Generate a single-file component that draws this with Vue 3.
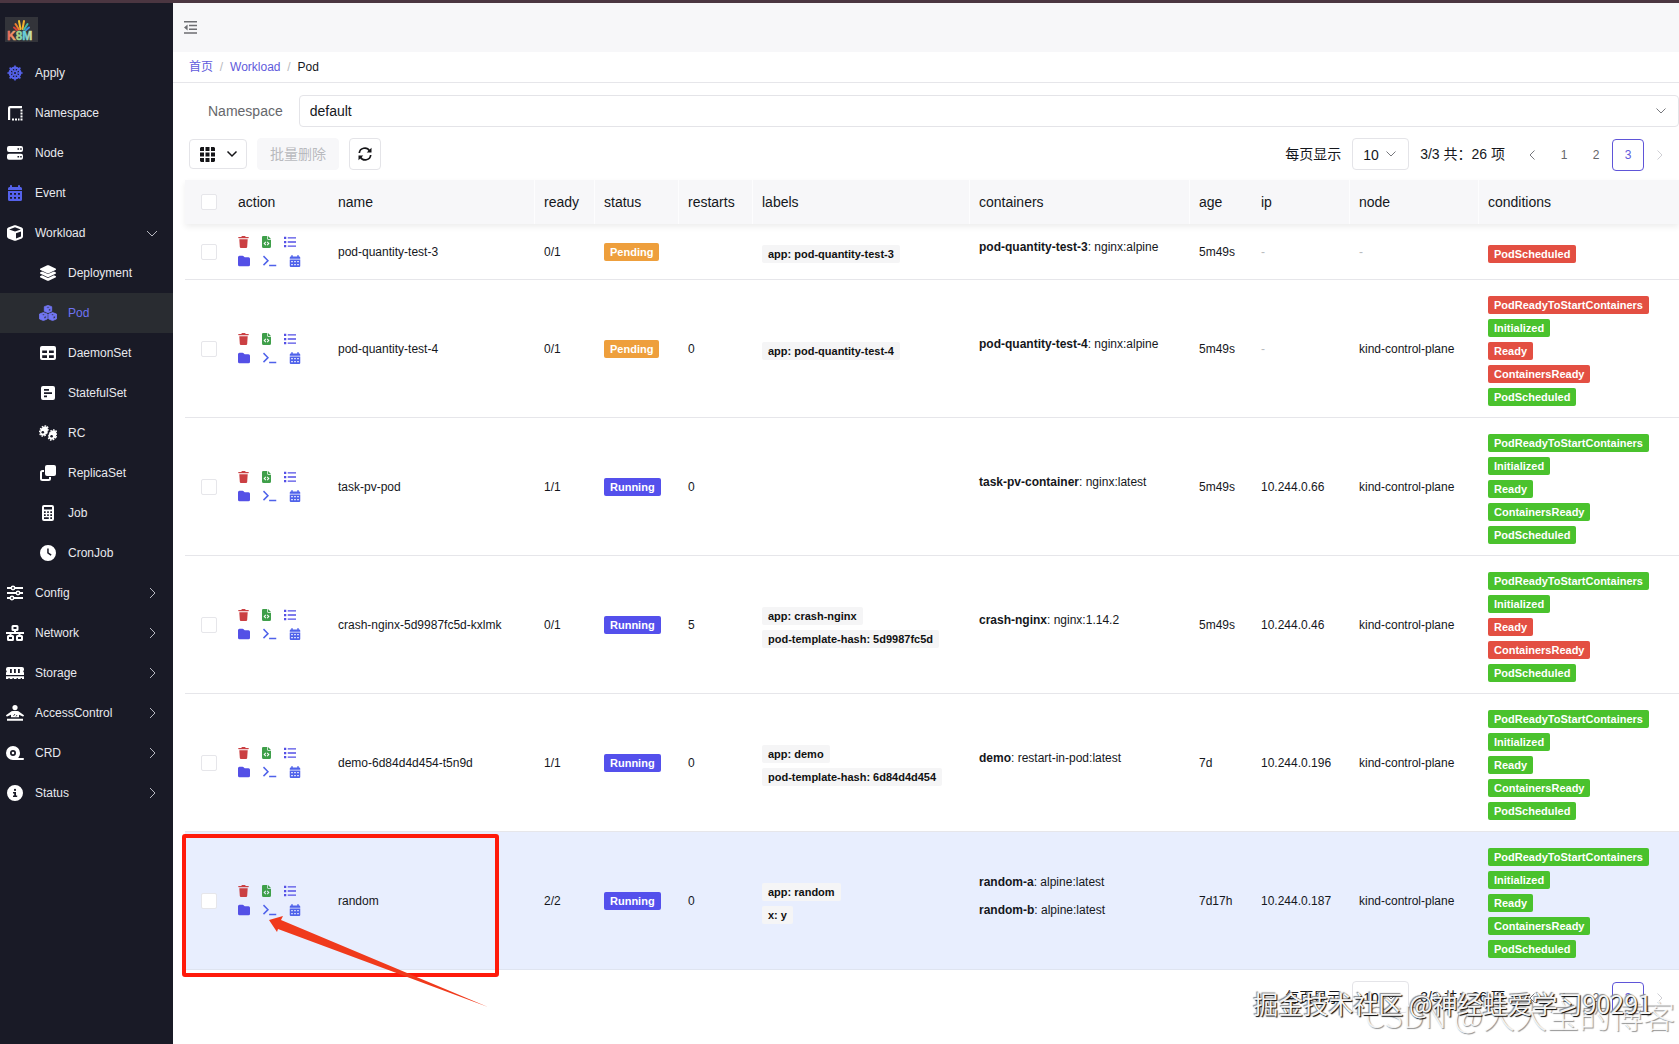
<script setup>
import { ref } from 'vue'

const icons = {
  helm: '<circle cx="8" cy="8" r="5.3" fill="none" stroke="currentColor" stroke-width="2.2"/><circle cx="8" cy="8" r="2.2"/><path d="M8 .4v15.2M.4 8h15.200M2.600 2.600l10.800 10.800M13.400 2.600L2.600 13.400" stroke="currentColor" stroke-width="1.600"/><circle cx="8" cy="8" r="1" fill="#191a26"/>',
  border: '<path d="M1 15V3a2 2 0 0 1 2-2h12v2.200H3.200V15z"/><path d="M5 13.500h2v2H5zM8 13.500h2v2H8zM11 13.500h1.500v2H11zM13.500 13.500h2v2h-2zM13.500 10.500h2v2h-2zM13.500 7.500h2v2h-2zM13.500 4.500h2v2h-2z"/>',
  server: '<path fill-rule="evenodd" d="M2 1h12a2 2 0 0 1 2 2v2a2 2 0 0 1-2 2H2a2 2 0 0 1-2-2V3a2 2 0 0 1 2-2zm8.500 2.200v1.600h1.600V3.200zm2.700 0v1.600h1.500V3.200zM2 8.800h12a2 2 0 0 1 2 2v2a2 2 0 0 1-2 2H2a2 2 0 0 1-2-2v-2a2 2 0 0 1 2-2zM10.500 11v1.600h1.600V11zm2.700 0v1.600h1.500V11z"/>',
  calendar: '<path fill-rule="evenodd" d="M4 0c.6 0 1 .4 1 1v1h6V1a1 1 0 1 1 2 0v1h.500A1.500 1.500 0 0 1 15 3.500V5H1V3.500A1.500 1.500 0 0 1 2.500 2H3V1c0-.6.4-1 1-1zM1 6h14v8.500a1.500 1.500 0 0 1-1.500 1.500h-11A1.500 1.500 0 0 1 1 14.500zm2 2v1.700h2V8zm4 0v1.700h2V8zm4 0v1.700h2V8zm-8 4v1.700h2V12zm4 0v1.700h2V12zm4 0v1.700h2V12z"/>',
  cube: '<path fill-rule="evenodd" d="M7.300.3a2 2 0 0 1 1.400 0l6 2.200A2 2 0 0 1 16 4.400v7.200a2 2 0 0 1-1.200 1.800l-6 2.300a2 2 0 0 1-1.500 0l-6-2.300A2 2 0 0 1 0 11.600V4.400a2 2 0 0 1 1.300-1.900zM8 2.300L2.200 4.400 8 6.500l5.800-2.100zm1 11.200l5-1.900V6.400L9 8.200z"/>',
  layers: '<path d="M7.300.3a1.600 1.600 0 0 1 1.400 0l6.800 3.200c.7.3.7 1.200 0 1.500L8.700 8.200a1.600 1.600 0 0 1-1.400 0L.5 5c-.7-.3-.7-1.200 0-1.500zM.5 7.200l1.600-.8 4.700 2.200c.8.4 1.600.4 2.400 0l4.700-2.200 1.600.8c.7.3.7 1.200 0 1.500l-6.800 3.200a1.600 1.600 0 0 1-1.400 0L.5 8.700c-.7-.3-.7-1.200 0-1.500zm0 3.800l1.600-.8 4.700 2.200c.8.4 1.600.4 2.400 0l4.700-2.200 1.600.8c.7.3.7 1.200 0 1.500l-6.800 3.200a1.600 1.600 0 0 1-1.400 0L.5 12.500c-.7-.3-.7-1.200 0-1.500z"/>',
  cubes: '<g stroke="currentColor" stroke-width=".8" stroke-linejoin="round"><path fill-rule="evenodd" d="M9 .4l3.700 1.300v4.500L9 7.800 5.300 6.200V1.700zM9 1.600L6.800 2.400 9 3.200l2.200-.8zM9.600 6.300l2.100-.9V3.400l-2.100.8zM4.400 7.600l3.900 1.400v4.900l-3.900 1.700-3.900-1.700V9zM4.400 8.900L2.300 9.600l2.100.8 2.100-.8zM5 13.900l2.200-.9v-2.200L5 11.600zM13.600 7.600L17.500 9v4.900l-3.900 1.700-3.900-1.700V9zM13.600 8.900l-2.100.7 2.100.8 2.100-.8zM14.200 13.900l2.200-.9v-2.200l-2.200.8z"/></g>',
  table: '<path fill-rule="evenodd" d="M2 1h12a2 2 0 0 1 2 2v10a2 2 0 0 1-2 2H2a2 2 0 0 1-2-2V3a2 2 0 0 1 2-2zm.2 4.500v2.600H7V5.500zm6.800 0v2.600h4.800V5.500zM2.200 10.200V13H7v-2.800zm6.800 0V13h4.800v-2.800z"/>',
  poll: '<path fill-rule="evenodd" d="M3 1h10a2 2 0 0 1 2 2v10a2 2 0 0 1-2 2H3a2 2 0 0 1-2-2V3a2 2 0 0 1 2-2zm1 3v1.800h5V4zm0 3.200V9h8V7.200zm0 3.200v1.800h3v-1.800z"/>',
  gears: '<g transform="rotate(28 5 6)"><ellipse cx="5" cy="6" rx="3.600" ry="5"/><ellipse cx="5" cy="6" rx="4" ry="5.400" fill="none" stroke="currentColor" stroke-width="1.400" stroke-dasharray="1.600 1.200"/></g><g transform="rotate(28 13.500 10)"><ellipse cx="13.500" cy="10" rx="3.600" ry="5"/><ellipse cx="13.500" cy="10" rx="4" ry="5.400" fill="none" stroke="currentColor" stroke-width="1.400" stroke-dasharray="1.600 1.200"/></g><path d="M11.800 1.500L6.800 14.500" stroke="#191a26" stroke-width="1.500"/><circle cx="3.800" cy="7.200" r="1.300" fill="#191a26"/><circle cx="12.600" cy="11.300" r="1.300" fill="#191a26"/>',
  clone: '<path d="M7 0h7a2 2 0 0 1 2 2v7a2 2 0 0 1-2 2H7a2 2 0 0 1-2-2V2a2 2 0 0 1 2-2z"/><path d="M4 6H2.500A1.500 1.500 0 0 0 1 7.500v6A1.500 1.500 0 0 0 2.500 15h6a1.500 1.500 0 0 0 1.500-1.500V12" fill="none" stroke="currentColor" stroke-width="2"/>',
  calculator: '<path fill-rule="evenodd" d="M4 0h8a2 2 0 0 1 2 2v12a2 2 0 0 1-2 2H4a2 2 0 0 1-2-2V2a2 2 0 0 1 2-2zm0 2v2.600h8V2zm0 4.300V8h1.700V6.300zm3.200 0V8h1.600V6.300zm3.100 0V8H12V6.300zM4 9.300V11h1.700V9.300zm3.200 0V11h1.600V9.300zm3.100 0V11H12V9.300zM4 12.300V14h4.800v-1.700zm6.300 0V14H12v-1.700z"/>',
  clock: '<path fill-rule="evenodd" d="M8 0a8 8 0 1 1 0 16A8 8 0 0 1 8 0zm-.8 3.500V8c0 .3.1.5.300.6l3.200 2.100.9-1.200-2.900-1.900V3.500z"/>',
  sliders: '<path d="M0 3h16M0 8h16M0 13h16" stroke="currentColor" stroke-width="1.800"/><g fill="#191a26" stroke="currentColor" stroke-width="1.500"><circle cx="6" cy="3" r="1.700"/><circle cx="11" cy="8" r="1.700"/><circle cx="5" cy="13" r="1.700"/></g>',
  network: '<g fill="none" stroke="currentColor" stroke-width="2"><rect x="6.500" y="1" width="5" height="4" rx=".5"/><rect x="2" y="11" width="5" height="4" rx=".5"/><rect x="11" y="11" width="5" height="4" rx=".5"/><path d="M0 8h18M9 5v3M4.500 8v3M13.500 8v3"/></g>',
  memory: '<path fill-rule="evenodd" d="M2 2h14a2 2 0 0 1 2 2v1.200a1.200 1.200 0 0 0 0 2.200V10H0V7.400a1.200 1.200 0 0 0 0-2.200V4a2 2 0 0 1 2-2zm2 2v4h1.800V4zm4 0v4h1.800V4zm4 0v4h1.800V4z"/><path d="M0 11.200h18V14h-2v-1h-1.300v1h-2.800v-1h-1.300v1H7.800v-1H6.500v1H3.700v-1H2.400v1H0z"/>',
  person: '<circle cx="9" cy="2.600" r="2.600"/><path d="M6.800 6h4.400c1 0 1.700.4 2.300 1l4.200 3c.7.600 0 1.800-.9 1.400L13 9.800v2.500H5V9.800l-3.800 1.600c-.9.400-1.600-.8-.9-1.400l4.200-3c.6-.6 1.300-1 2.300-1zM1 13.700h16v2H1z"/><path d="M7.500 11l1.500-2M10 11.500l1-1.500" stroke="#191a26" stroke-width=".8"/>',
  tape: '<path fill-rule="evenodd" d="M7 1a7 7 0 0 1 7 7c0 1.900-.7 3.600-1.800 4.900H17a1 1 0 1 1 0 2.100H7A7 7 0 0 1 7 1zm0 4a3 3 0 1 0 0 6 3 3 0 0 0 0-6zm0 1.700a1.300 1.300 0 1 1 0 2.600 1.300 1.300 0 0 1 0-2.600z"/>',
  info: '<path fill-rule="evenodd" d="M8 0a8 8 0 1 1 0 16A8 8 0 0 1 8 0zm0 3.800a1.100 1.100 0 1 0 0 2.200 1.100 1.100 0 0 0 0-2.200zM6 7v1.500h1.200v2H6V12h4.200v-1.500H9V7z"/>',
  trash: '<path d="M5.300.6L5 1.200H1.800a.9.900 0 0 0 0 1.900h12.400a.9.900 0 0 0 0-1.900H11l-.3-.6A1 1 0 0 0 9.800 0H6.200a1 1 0 0 0-.9.600zM2.400 4.200l.7 10.400A1.500 1.500 0 0 0 4.600 16h6.800a1.500 1.500 0 0 0 1.500-1.400l.7-10.400z"/>',
  file: '<path fill-rule="evenodd" d="M3.500 0H9v4a1 1 0 0 0 1 1h4v9a2 2 0 0 1-2 2H4a2 2 0 0 1-2-2V1.500A1.500 1.500 0 0 1 3.500 0zM10 0l4 4h-4zM6.600 7.300L4 10l2.600 2.800 1-1L6 10l1.600-1.700zm2.800 0l-1 1L10 10l-1.600 1.800 1 1L12 10z"/>',
  list: '<path d="M0 1h3v3H0zM0 6.500h3v3H0zM0 12h3v3H0zM5 1.600h11v1.800H5zM5 7.100h11v1.800H5zM5 12.600h11v1.800H5z"/>',
  folder: '<path d="M2 1h4a2 2 0 0 1 1.500.6l1 1c.3.300.6.400 1 .4H14a2 2 0 0 1 2 2v8a2 2 0 0 1-2 2H2a2 2 0 0 1-2-2V3a2 2 0 0 1 2-2z"/>',
  terminal: '<path d="M1 1.500L7 7.500l-6 6M8.500 14H18" fill="none" stroke="currentColor" stroke-width="1.900"/>',
}

const menu = [
  { label: 'Apply', icon: 'helm', blue: true },
  { label: 'Namespace', icon: 'border' },
  { label: 'Node', icon: 'server' },
  { label: 'Event', icon: 'calendar', blue: true },
  { label: 'Workload', icon: 'cube', open: true, group: true },
  { label: 'Deployment', icon: 'layers', sub: true },
  { label: 'Pod', icon: 'cubes', sub: true, active: true, wide: true },
  { label: 'DaemonSet', icon: 'table', sub: true },
  { label: 'StatefulSet', icon: 'poll', sub: true },
  { label: 'RC', icon: 'gears', sub: true, wide: true },
  { label: 'ReplicaSet', icon: 'clone', sub: true },
  { label: 'Job', icon: 'calculator', sub: true },
  { label: 'CronJob', icon: 'clock', sub: true },
  { label: 'Config', icon: 'sliders', group: true },
  { label: 'Network', icon: 'network', group: true, wide: true },
  { label: 'Storage', icon: 'memory', group: true, wide: true },
  { label: 'AccessControl', icon: 'person', group: true, wide: true },
  { label: 'CRD', icon: 'tape', group: true, wide: true },
  { label: 'Status', icon: 'info', group: true },
]

const actions = [
  [['trash', 'red', 'Delete'], ['file', 'green', 'YAML'], ['list', 'violet', 'Logs']],
  [['folder', 'violet', 'Files'], ['terminal', 'blue', 'Terminal'], ['calendar', 'blue', 'Events']],
]

const columns = ['action', 'name', 'ready', 'status', 'restarts', 'labels', 'containers', 'age', 'ip', 'node', 'conditions']
const names = ['PodReadyToStartContainers', 'Initialized', 'Ready', 'ContainersReady', 'PodScheduled']
const conditions = (...failed) => names.map((name, i) => ({ name, ok: !failed.includes(i) }))
const node = 'kind-control-plane'

const pods = [
  { name: 'pod-quantity-test-3', ready: '0/1', status: 'Pending', restarts: '', labels: ['app: pod-quantity-test-3'], containers: [['pod-quantity-test-3', 'nginx:alpine']], age: '5m49s', conditions: [{ name: 'PodScheduled', ok: false }], compact: true },
  { name: 'pod-quantity-test-4', ready: '0/1', status: 'Pending', restarts: '0', labels: ['app: pod-quantity-test-4'], containers: [['pod-quantity-test-4', 'nginx:alpine']], age: '5m49s', node, conditions: conditions(0, 2, 3) },
  { name: 'task-pv-pod', ready: '1/1', status: 'Running', restarts: '0', labels: [], containers: [['task-pv-container', 'nginx:latest']], age: '5m49s', ip: '10.244.0.66', node, conditions: conditions() },
  { name: 'crash-nginx-5d9987fc5d-kxlmk', ready: '0/1', status: 'Running', restarts: '5', labels: ['app: crash-nginx', 'pod-template-hash: 5d9987fc5d'], containers: [['crash-nginx', 'nginx:1.14.2']], age: '5m49s', ip: '10.244.0.46', node, conditions: conditions(2, 3) },
  { name: 'demo-6d84d4d454-t5n9d', ready: '1/1', status: 'Running', restarts: '0', labels: ['app: demo', 'pod-template-hash: 6d84d4d454'], containers: [['demo', 'restart-in-pod:latest']], age: '7d', ip: '10.244.0.196', node, conditions: conditions() },
  { name: 'random', ready: '2/2', status: 'Running', restarts: '0', labels: ['app: random', 'x: y'], containers: [['random-a', 'alpine:latest'], ['random-b', 'alpine:latest']], age: '7d17h', ip: '10.244.0.187', node, conditions: conditions(), hover: true },
]

const namespace = ref('default')
const perPage = ref('10')
</script>

<template>
  <div class="app">
    <aside class="sidebar">
      <svg class="logo" viewBox="0 0 33 25" role="img" aria-label="K8M">
        <defs>
          <linearGradient id="logo-fill" x1="0" x2="1">
            <stop offset="0" stop-color="#e8605a" /><stop offset=".28" stop-color="#f3a26f" />
            <stop offset=".45" stop-color="#9fdc8a" /><stop offset=".7" stop-color="#5fd0e8" /><stop offset="1" stop-color="#e9e48a" />
          </linearGradient>
        </defs>
        <rect width="33" height="25" fill="#33343a" />
        <g stroke-width="2" stroke-linecap="round">
          <path d="M15.500 12L14 4" stroke="#f2c230" /><path d="M17.500 12L19 4" stroke="#f5b32e" />
          <path d="M14 12.500L10.500 7" stroke="#ef7f2f" /><path d="M19 12.500L22.500 7" stroke="#46b9a0" />
          <path d="M12 13L9 10.500" stroke="#d9433a" /><path d="M21 13L24 10.500" stroke="#3c8fe0" />
        </g>
        <text x="2" y="23" font-size="12" font-weight="700" fill="url(#logo-fill)" stroke="url(#logo-fill)" stroke-width=".5">K8M</text>
      </svg>
      <nav>
        <a v-for="m in menu" :key="m.label" href="#" class="item" :class="{ sub: m.sub, active: m.active }">
          <span class="glyph" :class="{ blue: m.blue }">
            <svg :width="m.wide ? 18 : 16" height="16" :viewBox="m.wide ? '0 0 18 16' : '0 0 16 16'" fill="currentColor" v-html="icons[m.icon]" />
          </span>
          <span>{{ m.label }}</span>
          <svg v-if="m.group" class="arrow" :class="{ open: m.open }" viewBox="0 0 10 10"><path d="M3 0l5 5-5 5" /></svg>
        </a>
      </nav>
    </aside>

    <main class="main">
      <header class="topbar">
        <button class="plain" aria-label="Collapse menu">
          <svg width="13" height="13" viewBox="0 0 13 13" fill="#6d6e72"><path d="M0 0h13v1.500H0zM5 3.800h8v1.400H5zM5 7.500h8v1.400H5zM0 11.300h13v1.500H0zM3.600 3.400v6L0 6.400z" /></svg>
        </button>
      </header>

      <nav class="crumbs">
        <a href="#">首页</a><i>/</i><a href="#">Workload</a><i>/</i><span>Pod</span>
      </nav>

      <div class="filter">
        <label for="ns">Namespace</label>
        <div class="select">
          <select id="ns" v-model="namespace"><option>default</option></select>
          <svg class="chevron" viewBox="0 0 10 6"><path d="M.5.5L5 5 9.500.5" /></svg>
        </div>
      </div>

      <div class="toolbar">
        <button class="btn columns" aria-label="Columns">
          <svg width="15" height="15" viewBox="0 0 15 15" fill="#151518"><path d="M1 0h3v4H0V1zM5.500 0h4v4h-4zM11 0h3l1 1v3h-4zM0 5.500h4v4H0zM5.500 5.500h4v4h-4zM11 5.500h4v4h-4zM0 11h4v4H1l-1-1zM5.500 11h4v4h-4zM11 11h4v3l-1 1h-3z" /></svg>
          <svg class="chevron dark" viewBox="0 0 10 6"><path d="M.5.5L5 5 9.500.5" /></svg>
        </button>
        <button class="btn batch" disabled>批量删除</button>
        <button class="btn square" aria-label="Refresh">
          <svg width="14" height="14" viewBox="0 0 14 14"><path d="M1.300 6A5.500 5.500 0 0 1 11.500 3.800M12.700 8A5.500 5.500 0 0 1 2.500 10.200" fill="none" stroke="#151518" stroke-width="1.700" /><path d="M13.500.8v4.800H8.700zM.5 13.200V8.400h4.800z" fill="#151518" /></svg>
        </button>
        <div class="pager">
          <label for="size-top">每页显示</label>
          <div class="select size">
            <select id="size-top" v-model="perPage"><option>10</option></select>
            <svg class="chevron" viewBox="0 0 10 6"><path d="M.5.5L5 5 9.500.5" /></svg>
          </div>
          <span>3/3 共：26 项</span>
          <div class="pages">
            <button aria-label="Previous"><svg viewBox="0 0 6 10"><path d="M5.500.5L1 5l4.500 4.500" /></svg></button>
            <button>1</button><button>2</button><button class="current">3</button>
            <button aria-label="Next" disabled><svg viewBox="0 0 6 10"><path d="M.5.5L5 5 .5 9.500" /></svg></button>
          </div>
        </div>
      </div>

      <div class="table-wrap">
        <table>
          <colgroup>
            <col class="c-check" /><col v-for="c in columns" :key="c" :class="'c-' + c" />
          </colgroup>
          <thead>
            <tr>
              <th><input type="checkbox" aria-label="Select all" /></th>
              <th v-for="c in columns" :key="c" :class="'h-' + c">{{ c }}</th>
            </tr>
          </thead>
          <tbody>
            <tr v-for="p in pods" :key="p.name" :class="{ compact: p.compact, hover: p.hover }">
              <td><input type="checkbox" :aria-label="'Select ' + p.name" /></td>
              <td>
                <div v-for="(line, i) in actions" :key="i" class="actions">
                  <button v-for="[icon, color, title] in line" :key="icon" class="plain" :class="color" :aria-label="title">
                    <svg :width="icon === 'terminal' ? 15 : icon === 'file' || icon === 'trash' ? 11 : 12" height="12" :viewBox="icon === 'terminal' ? '0 0 18 16' : icon === 'file' || icon === 'trash' ? '1 0 14 16' : '0 0 16 16'" fill="currentColor" v-html="icons[icon]" />
                  </button>
                </div>
              </td>
              <td>{{ p.name }}</td>
              <td>{{ p.ready }}</td>
              <td><span class="tag" :class="p.status.toLowerCase()">{{ p.status }}</span></td>
              <td>{{ p.restarts }}</td>
              <td><div class="stack"><span v-for="l in p.labels" :key="l" class="tag grey">{{ l }}</span></div></td>
              <td><div class="containers"><div v-for="[n, image] in p.containers" :key="n"><b>{{ n }}</b>: {{ image }}</div></div></td>
              <td>{{ p.age }}</td>
              <td><template v-if="p.ip">{{ p.ip }}</template><span v-else class="none">-</span></td>
              <td><template v-if="p.node">{{ p.node }}</template><span v-else class="none">-</span></td>
              <td><div class="stack"><span v-for="c in p.conditions" :key="c.name" class="tag" :class="c.ok ? 'ok' : 'fail'">{{ c.name }}</span></div></td>
            </tr>
          </tbody>
        </table>
        <svg class="callout" viewBox="0 0 317 176" aria-hidden="true">
          <rect x="2" y="2" width="313" height="139" rx="1" fill="none" stroke="#ff1a0a" stroke-width="4" />
          <path d="M87 86L101 82 99 86 306 173 96 95 95 98z" fill="#f03a1c" />
        </svg>
      </div>

      <footer class="bottom">
        <div class="pager">
          <label for="size-bottom">每页显示</label>
          <div class="select size">
            <select id="size-bottom" v-model="perPage"><option>10</option></select>
            <svg class="chevron" viewBox="0 0 10 6"><path d="M.5.5L5 5 9.500.5" /></svg>
          </div>
          <span>3/3 共：26 项</span>
          <div class="pages">
            <button aria-label="Previous"><svg viewBox="0 0 6 10"><path d="M5.500.5L1 5l4.500 4.500" /></svg></button>
            <button>1</button><button>2</button><button class="current">3</button>
            <button aria-label="Next" disabled><svg viewBox="0 0 6 10"><path d="M.5.5L5 5 .5 9.500" /></svg></button>
          </div>
        </div>
        <span class="mark pale">CSDN @大大宝的博客</span>
        <span class="mark strong">掘金技术社区 @神经蛙爱学习90291</span>
      </footer>
    </main>
  </div>
</template>

<style>
body { margin: 0; }
</style>

<style scoped>
.app {
  display: flex;
  min-height: 100vh;
  box-sizing: border-box;
  border-top: 3px solid #4b3641;
  background: #fff;
  color: #15171c;
  font: 12px/18px "Liberation Sans", "Noto Sans CJK SC", sans-serif;
}
button, select { font: inherit; color: inherit; }
a { text-decoration: none; }
svg { display: block; }

.sidebar { flex: 0 0 173px; background: #191a26; }
.logo { width: 33px; height: 25px; margin: 14px 0 11px 5px; }
.item { display: flex; align-items: center; height: 40px; color: #e8e9ee; }
.item.sub { padding-left: 33px; }
.item.active { background: #292c31; color: #6f73f2; }
.glyph { display: flex; justify-content: center; width: 30px; margin-right: 5px; color: #fff; }
.active .glyph { color: #7276f5; }
.glyph.blue { color: #5562ea; }
.arrow { width: 10px; height: 10px; margin: 0 16px 0 auto; fill: none; stroke: #b7b8c0; stroke-width: 1; }
.arrow.open { transform: rotate(90deg); }

.main { flex: 1; min-width: 0; }
.topbar { display: flex; align-items: center; height: 49px; padding-left: 11px; background: #f7f7f9; }
.plain { padding: 0; border: 0; background: none; }
.crumbs { display: flex; align-items: center; height: 30px; padding-left: 16px; border-bottom: 1px solid #e6e6ea; }
.crumbs a { color: #5f5bdc; }
.crumbs i { width: 17px; color: #b9b9be; font-style: normal; text-align: center; }

.filter { display: flex; align-items: center; gap: 16px; padding: 12px 0 0 35px; font-size: 14px; }
.filter label { color: #66676b; }
.select { position: relative; flex: 1; }
.select select {
  display: block;
  width: 100%;
  height: 32px;
  padding: 0 10px;
  border: 1px solid #e4e4e8;
  border-radius: 4px;
  background: #fff;
  appearance: none;
  font-size: 14px;
}
.select.size { flex: 0 0 57px; }
.chevron { width: 10px; height: 6px; fill: none; stroke: #77787d; stroke-width: 1; }
.chevron.dark { stroke: #151518; stroke-width: 1.5; overflow: visible; }
.select .chevron { position: absolute; right: 13px; top: 13px; pointer-events: none; }

.toolbar { display: flex; align-items: flex-start; gap: 10px; padding: 11px 3px 9px 16px; font-size: 14px; }
.btn { display: flex; align-items: center; justify-content: center; box-sizing: border-box; height: 32px; padding: 0; border: 1px solid #e4e4e8; border-radius: 4px; background: #fff; }
.btn.columns { width: 58px; height: 30px; margin-top: 1px; gap: 12px; }
.btn.batch { width: 82px; border-color: #f7f7f9; background: #f7f7f9; color: #b9babe; }
.btn.square { width: 32px; }

.pager { display: flex; align-items: flex-start; gap: 11px; margin-left: auto; font-size: 14px; line-height: 32px; }
.pages { display: flex; padding-top: 1px; font-size: 12px; }
.pages button { display: flex; align-items: center; justify-content: center; box-sizing: border-box; width: 32px; height: 32px; padding: 0; border: 0; background: none; color: #66676b; }
.pages .current { border: 1px solid #5f55d8; border-radius: 4px; color: #5f5bdc; }
.pages svg { width: 6px; height: 10px; fill: none; stroke: #77787d; }
.pages button:disabled svg { stroke: #cfcfd4; }

.table-wrap { position: relative; margin-left: 12px; }
table { width: 100%; border-collapse: separate; border-spacing: 0; table-layout: fixed; }
.c-check { width: 43px; }
.c-action { width: 100px; }
.c-name { width: 206px; }
.c-ready { width: 60px; }
.c-status { width: 84px; }
.c-restarts { width: 74px; }
.c-labels { width: 217px; }
.c-containers { width: 220px; }
.c-age { width: 62px; }
.c-ip { width: 98px; }
.c-node { width: 129px; }
th { height: 44px; box-sizing: border-box; padding: 0 0 0 10px; background: #f7f7f9; font-size: 14px; font-weight: 400; text-align: left; }
.h-ready, .h-status, .h-restarts, .h-labels, .h-containers, .h-age, .h-node, .h-conditions { box-shadow: inset 1px 0 #fdfdfe; }
thead tr { box-shadow: 0 3px 6px #00000012; }
td { height: 138px; box-sizing: border-box; padding: 0 0 0 10px; border-bottom: 1px solid #e6e6ea; white-space: nowrap; vertical-align: middle; }
.compact td { height: 56px; }
.hover td { background: #e8eefe; border-color: #dfe4f0; }
th:first-child, td:first-child { padding-left: 16px; }
input[type="checkbox"] { display: block; width: 16px; height: 16px; box-sizing: border-box; margin: 0; border: 1px solid #e6e6ea; border-radius: 2px; background: #fff; appearance: none; }

.actions { display: flex; align-items: center; gap: 12px; height: 19px; }
.red { color: #cb4043; }
.green { color: #3f9f4a; }
.violet { color: #5450e6; }
.blue { color: #4f62ea; }

.tag { display: inline-block; height: 18px; padding: 0 6px; border-radius: 2px; color: #fff; font-size: 11px; font-weight: 700; line-height: 18px; vertical-align: middle; }
.tag.pending { background: #ee9f3c; }
.tag.running { background: #5450ec; }
.tag.ok { background: #4ac22d; }
.tag.fail { background: #e34f42; }
.tag.grey { background: #f5f5f6; color: #111; }
.stack { display: flex; flex-direction: column; align-items: flex-start; gap: 5px; padding-top: 5px; }
.containers { padding-bottom: 10px; line-height: 28px; }
.none { color: #b9babe; }

.callout { position: absolute; left: -3px; bottom: -40px; width: 317px; height: 176px; pointer-events: none; }

.bottom { position: relative; display: flex; padding: 11px 3px 0 0; }
.mark { position: absolute; white-space: nowrap; pointer-events: none; font-family: "Noto Sans CJK SC", sans-serif; line-height: 32px; }
.mark.pale { right: 4px; top: 28px; color: #ffffffd9; font-size: 32px; font-weight: 300; text-shadow: 1px 1px 1px #909090; }
.mark.strong { right: 27px; top: 17px; color: #f4f4f4; font-size: 25px; text-shadow: 1px 1px 1px #000, -1px -1px 1px #888; }
</style>
